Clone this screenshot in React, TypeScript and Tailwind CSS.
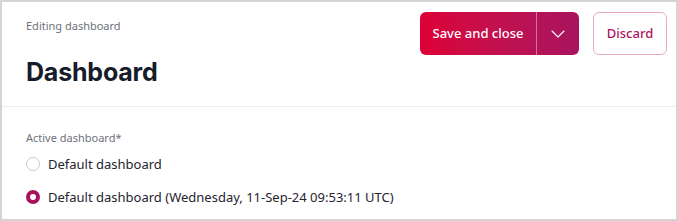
import { useState } from "react";

const options = [
  { id: "default", label: "Default dashboard" },
  { id: "snapshot", label: "Default dashboard (Wednesday, 11-Sep-24 09:53:11 UTC)" },
];

export default function App() {
  const [active, setActive] = useState("snapshot");

  return (
    <div className="h-[221px] w-[678px] border-2 border-[#d4d4d4] bg-white font-['Noto_Sans',sans-serif]">
      {/* Header */}
      <div className="flex h-[105px] justify-between border-b border-[#ececf0] pl-6 pr-[9px]">
        <div className="pt-[16px]">
          <div className="text-[11px] leading-4 text-[#6e717c]">Editing dashboard</div>
          <h1 className="mt-[22px] font-['Inter',sans-serif] text-[25px] leading-8 font-bold tracking-[-0.2px] text-[#161c2a]">
            Dashboard
          </h1>
        </div>
        <div className="flex items-start gap-[14px] pt-[10px]">
          <div className="flex h-[43px] overflow-hidden rounded-md bg-gradient-to-r from-[#dc0036] to-[#a8135f] text-white">
            <button className="w-[116px] text-[13px] font-medium">Save and close</button>
            <div className="w-px bg-white/40" />
            <button className="flex w-[42px] items-center justify-center">
              <svg width="14" height="8" viewBox="0 0 14 8" fill="none">
                <path d="M1 1l6 6 6-6" stroke="white" strokeWidth="1.1" strokeLinecap="round" strokeLinejoin="round" />
              </svg>
            </button>
          </div>
          <button className="h-[43px] w-[74px] rounded-md border border-[#e9a9c8] text-[13px] font-medium text-[#b0145f]">
            Discard
          </button>
        </div>
      </div>

      {/* Body */}
      <div className="pl-6 pt-[23px]">
        <div className="text-[11px] leading-4 text-[#6e717c]">Active dashboard*</div>
        <div className="mt-[8px] flex flex-col gap-[13px]">
          {options.map((o) => {
            const checked = active === o.id;
            return (
              <label key={o.id} className="flex cursor-pointer items-center gap-2 text-[13px] leading-5 text-[#1f2430]">
                <input
                  type="radio"
                  name="active"
                  checked={checked}
                  onChange={() => setActive(o.id)}
                  className="sr-only"
                />
                <span
                  className={
                    checked
                      ? "h-[14px] w-[14px] rounded-full border-[4px] border-[#a8125a] bg-white"
                      : "h-[14px] w-[14px] rounded-full border border-[#c9cbd1] bg-white"
                  }
                />
                <span>{o.label}</span>
              </label>
            );
          })}
        </div>
      </div>
    </div>
  );
}
